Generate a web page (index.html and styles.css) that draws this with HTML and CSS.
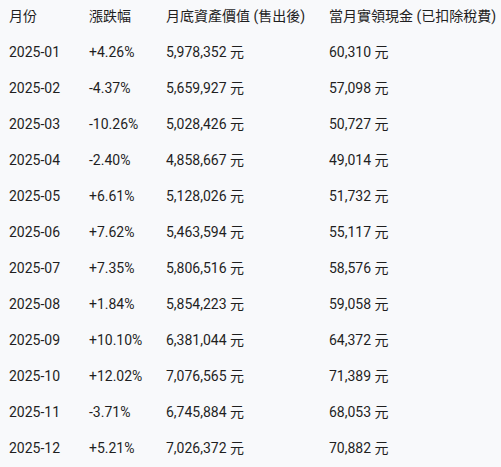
FILE: index.html
```html
<!DOCTYPE html>
<html lang="zh-Hant">
<head>
<meta charset="utf-8">
<link rel="stylesheet" href="styles.css">
</head>
<body>
<div class="table">
  <div class="row head"><span>月份</span><span>漲跌幅</span><span>月底資產價值 (售出後)</span><span>當月實領現金 (已扣除稅費)</span></div>
  <div class="row"><span>2025-01</span><span>+4.26%</span><span>5,978,352 元</span><span>60,310 元</span></div>
  <div class="row"><span>2025-02</span><span>-4.37%</span><span>5,659,927 元</span><span>57,098 元</span></div>
  <div class="row"><span>2025-03</span><span>-10.26%</span><span>5,028,426 元</span><span>50,727 元</span></div>
  <div class="row"><span>2025-04</span><span>-2.40%</span><span>4,858,667 元</span><span>49,014 元</span></div>
  <div class="row"><span>2025-05</span><span>+6.61%</span><span>5,128,026 元</span><span>51,732 元</span></div>
  <div class="row"><span>2025-06</span><span>+7.62%</span><span>5,463,594 元</span><span>55,117 元</span></div>
  <div class="row"><span>2025-07</span><span>+7.35%</span><span>5,806,516 元</span><span>58,576 元</span></div>
  <div class="row"><span>2025-08</span><span>+1.84%</span><span>5,854,223 元</span><span>59,058 元</span></div>
  <div class="row"><span>2025-09</span><span>+10.10%</span><span>6,381,044 元</span><span>64,372 元</span></div>
  <div class="row"><span>2025-10</span><span>+12.02%</span><span>7,076,565 元</span><span>71,389 元</span></div>
  <div class="row"><span>2025-11</span><span>-3.71%</span><span>6,745,884 元</span><span>68,053 元</span></div>
  <div class="row"><span>2025-12</span><span>+5.21%</span><span>7,026,372 元</span><span>70,882 元</span></div>
</div>
</body>
</html>
```
FILE: styles.css
```css
html, body {
  margin: 0;
  padding: 0;
  background: #f8f9fb;
}
body {
  font-family: Roboto, "Noto Sans CJK TC", sans-serif;
  font-size: 14px;
  color: #1f1f1f;
}
.table {
  padding-left: 9px;
}
.row {
  display: grid;
  grid-template-columns: 80px 77px 163px 1fr;
  height: 36px;
  line-height: 36px;
  white-space: nowrap;
}
.row.head {
  height: 34px;
  line-height: 32px;
}
```
